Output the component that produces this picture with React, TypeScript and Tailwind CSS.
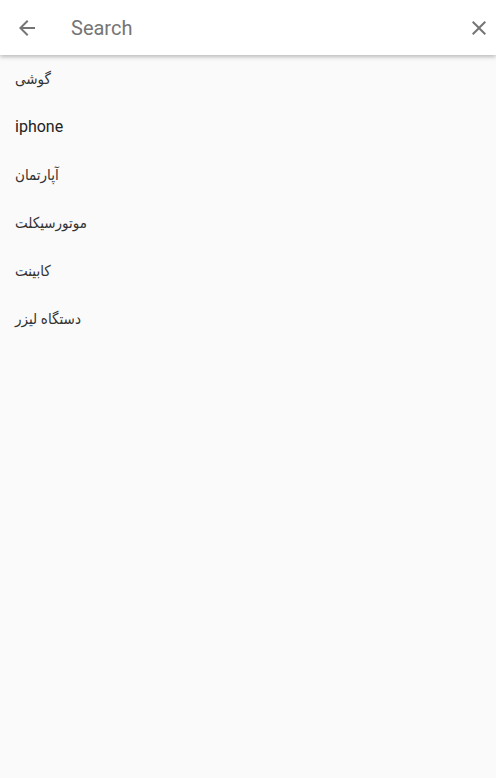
const items = ["گوشی", "iphone", "آپارتمان", "موتورسیکلت", "کابینت", "دستگاه لیزر"];

export default function App() {
  return (
    <div
      className="min-h-[778px] bg-[#fafafa]"
      style={{ fontFamily: "Roboto, 'DejaVu Sans Condensed', 'DejaVu Sans', sans-serif" }}
    >
      <header className="h-[55px] bg-white flex items-center shadow-[0_2px_4px_rgba(0,0,0,0.25)] relative">
        <button className="w-[54px] h-full flex items-center justify-center">
          <svg width="24" height="24" viewBox="0 0 24 24" fill="#757575">
            <path d="M20 11H7.83l5.59-5.59L12 4l-8 8 8 8 1.41-1.41L7.83 13H20v-2z" />
          </svg>
        </button>
        <input
          placeholder="Search"
          className="flex-1 ml-[17px] h-full bg-transparent outline-none text-[20px] text-[#212121] placeholder:text-[#757575]"
        />
        <button className="w-[34px] h-full flex items-center justify-center">
          <svg width="24" height="24" viewBox="0 0 24 24" fill="#757575">
            <path d="M19 6.41L17.59 5 12 10.59 6.41 5 5 6.41 10.59 12 5 17.59 6.41 19 12 13.41 17.59 19 19 17.59 13.41 12z" />
          </svg>
        </button>
      </header>
      <ul>
        {items.map((item) => (
          <li
            key={item}
            className={
              item === "iphone"
                ? "h-12 flex items-center px-[15px] text-[16px] text-[#222]"
                : "h-12 flex items-center px-[15px] text-[15px] text-[#333]"
            }
          >
            <span>{item}</span>
          </li>
        ))}
      </ul>
    </div>
  );
}
